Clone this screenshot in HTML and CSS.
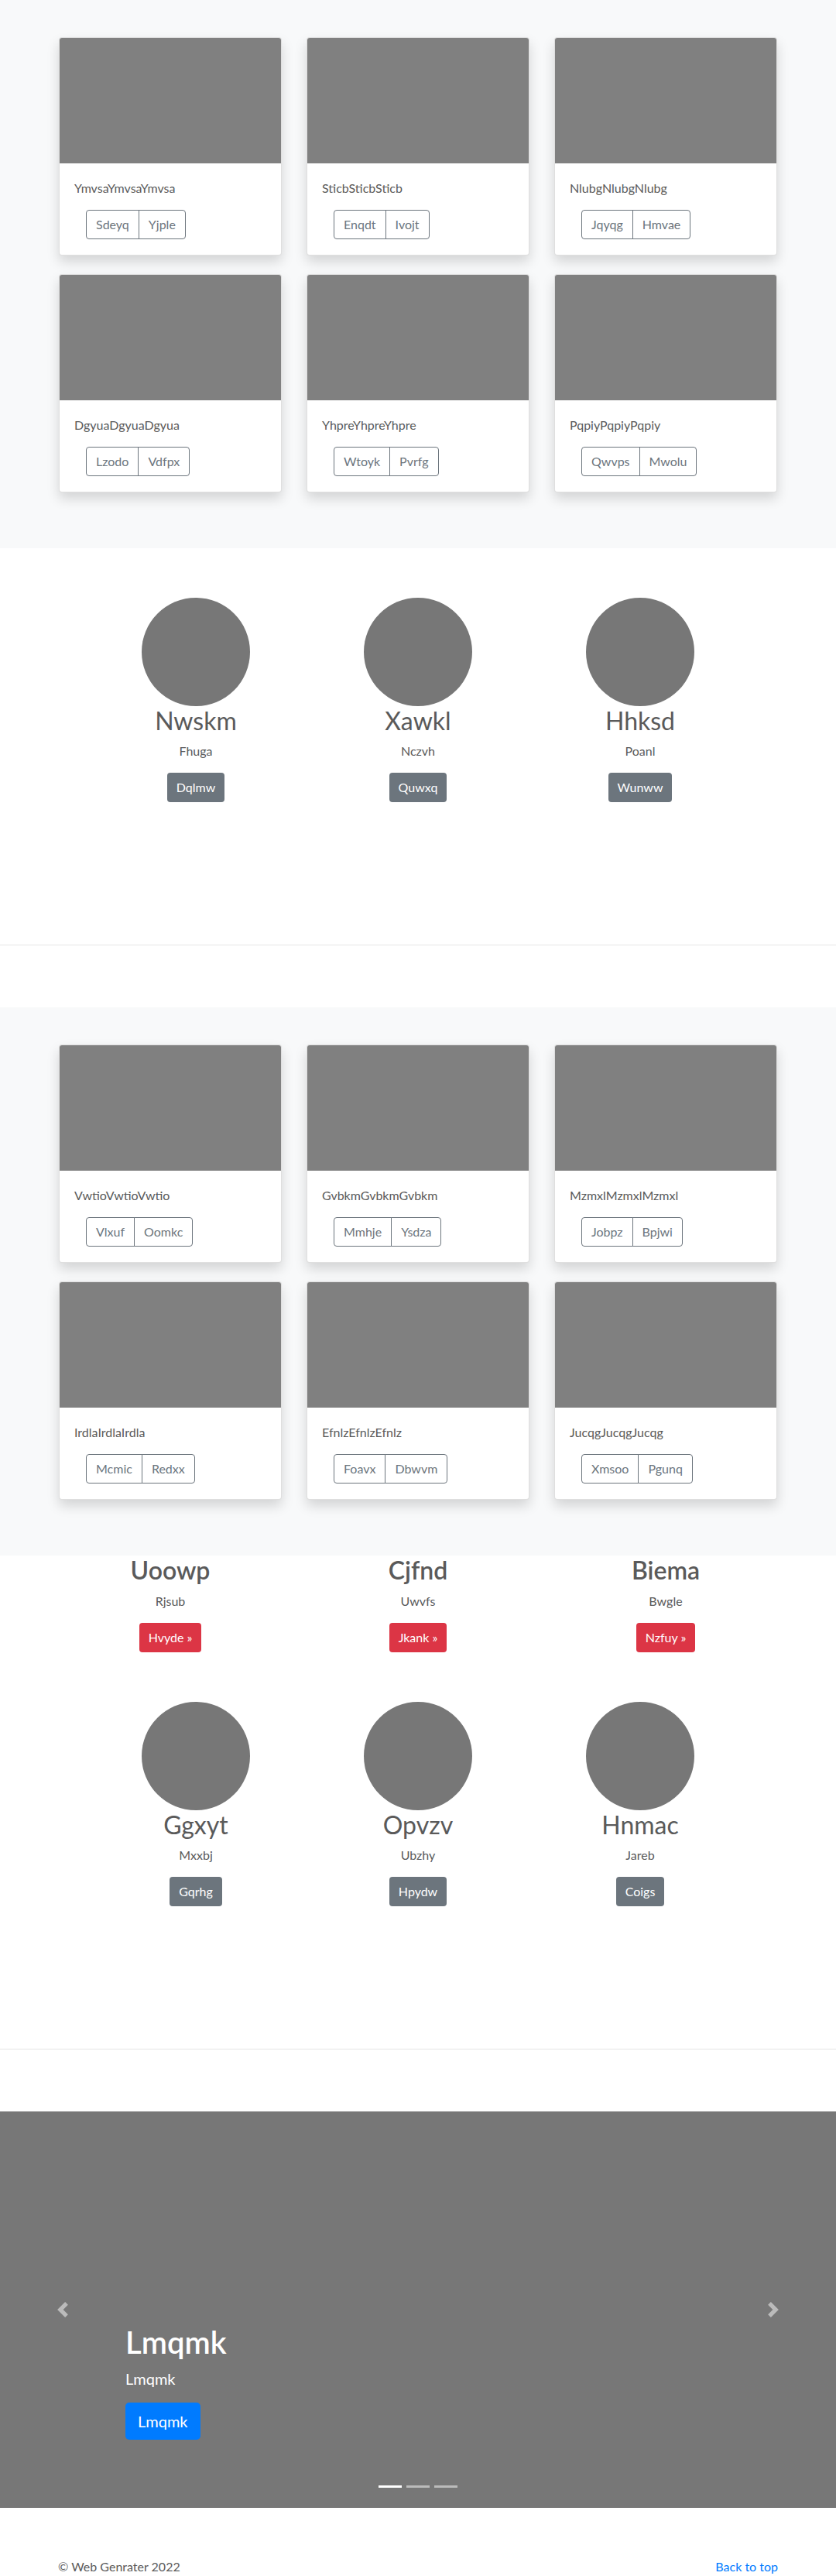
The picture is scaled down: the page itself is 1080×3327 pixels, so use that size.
FILE: index.html
```html
<!DOCTYPE html>
<html>

    <head>
        <title>Web Genrater</title>
        <link rel="stylesheet" href="styles.css">
    </head>

    <body>
        <section class="album">
            <div class="card-grid">
                <div class="card">
                    <div class="card-img"></div>
                    <div class="card-body">
                        <p class="card-text">YmvsaYmvsaYmvsa</p>
                        <div class="btn-group">
                            <button class="btn-outline">Sdeyq</button>
                            <button class="btn-outline">Yjple</button>
                        </div>
                    </div>
                </div>
                <div class="card">
                    <div class="card-img"></div>
                    <div class="card-body">
                        <p class="card-text">SticbSticbSticb</p>
                        <div class="btn-group">
                            <button class="btn-outline">Enqdt</button>
                            <button class="btn-outline">Ivojt</button>
                        </div>
                    </div>
                </div>
                <div class="card">
                    <div class="card-img"></div>
                    <div class="card-body">
                        <p class="card-text">NlubgNlubgNlubg</p>
                        <div class="btn-group">
                            <button class="btn-outline">Jqyqg</button>
                            <button class="btn-outline">Hmvae</button>
                        </div>
                    </div>
                </div>
                <div class="card">
                    <div class="card-img"></div>
                    <div class="card-body">
                        <p class="card-text">DgyuaDgyuaDgyua</p>
                        <div class="btn-group">
                            <button class="btn-outline">Lzodo</button>
                            <button class="btn-outline">Vdfpx</button>
                        </div>
                    </div>
                </div>
                <div class="card">
                    <div class="card-img"></div>
                    <div class="card-body">
                        <p class="card-text">YhpreYhpreYhpre</p>
                        <div class="btn-group">
                            <button class="btn-outline">Wtoyk</button>
                            <button class="btn-outline">Pvrfg</button>
                        </div>
                    </div>
                </div>
                <div class="card">
                    <div class="card-img"></div>
                    <div class="card-body">
                        <p class="card-text">PqpiyPqpiyPqpiy</p>
                        <div class="btn-group">
                            <button class="btn-outline">Qwvps</button>
                            <button class="btn-outline">Mwolu</button>
                        </div>
                    </div>
                </div>
            </div>
        </section>

        <section class="team">
            <div class="team-row">
                <div class="member">
                    <div class="avatar"></div>
                    <h2>Nwskm</h2>
                    <p>Fhuga</p>
                    <a class="btn btn-grey" href="#">Dqlmw</a>
                </div>
                <div class="member">
                    <div class="avatar"></div>
                    <h2>Xawkl</h2>
                    <p>Nczvh</p>
                    <a class="btn btn-grey" href="#">Quwxq</a>
                </div>
                <div class="member">
                    <div class="avatar"></div>
                    <h2>Hhksd</h2>
                    <p>Poanl</p>
                    <a class="btn btn-grey" href="#">Wunww</a>
                </div>
            </div>
        </section>

        <hr class="divider">

        <section class="album">
            <div class="card-grid">
                <div class="card">
                    <div class="card-img"></div>
                    <div class="card-body">
                        <p class="card-text">VwtioVwtioVwtio</p>
                        <div class="btn-group">
                            <button class="btn-outline">Vlxuf</button>
                            <button class="btn-outline">Oomkc</button>
                        </div>
                    </div>
                </div>
                <div class="card">
                    <div class="card-img"></div>
                    <div class="card-body">
                        <p class="card-text">GvbkmGvbkmGvbkm</p>
                        <div class="btn-group">
                            <button class="btn-outline">Mmhje</button>
                            <button class="btn-outline">Ysdza</button>
                        </div>
                    </div>
                </div>
                <div class="card">
                    <div class="card-img"></div>
                    <div class="card-body">
                        <p class="card-text">MzmxlMzmxlMzmxl</p>
                        <div class="btn-group">
                            <button class="btn-outline">Jobpz</button>
                            <button class="btn-outline">Bpjwi</button>
                        </div>
                    </div>
                </div>
                <div class="card">
                    <div class="card-img"></div>
                    <div class="card-body">
                        <p class="card-text">IrdlaIrdlaIrdla</p>
                        <div class="btn-group">
                            <button class="btn-outline">Mcmic</button>
                            <button class="btn-outline">Redxx</button>
                        </div>
                    </div>
                </div>
                <div class="card">
                    <div class="card-img"></div>
                    <div class="card-body">
                        <p class="card-text">EfnlzEfnlzEfnlz</p>
                        <div class="btn-group">
                            <button class="btn-outline">Foavx</button>
                            <button class="btn-outline">Dbwvm</button>
                        </div>
                    </div>
                </div>
                <div class="card">
                    <div class="card-img"></div>
                    <div class="card-body">
                        <p class="card-text">JucqgJucqgJucqg</p>
                        <div class="btn-group">
                            <button class="btn-outline">Xmsoo</button>
                            <button class="btn-outline">Pgunq</button>
                        </div>
                    </div>
                </div>
            </div>
        </section>

        <section class="team team-promo">
            <div class="promo-row">
                <div class="promo">
                    <h2>Uoowp</h2>
                    <p>Rjsub</p>
                    <a class="btn btn-red" href="#">Hvyde &raquo;</a>
                </div>
                <div class="promo">
                    <h2>Cjfnd</h2>
                    <p>Uwvfs</p>
                    <a class="btn btn-red" href="#">Jkank &raquo;</a>
                </div>
                <div class="promo">
                    <h2>Biema</h2>
                    <p>Bwgle</p>
                    <a class="btn btn-red" href="#">Nzfuy &raquo;</a>
                </div>
            </div>
            <div class="team-row">
                <div class="member">
                    <div class="avatar"></div>
                    <h2>Ggxyt</h2>
                    <p>Mxxbj</p>
                    <a class="btn btn-grey" href="#">Gqrhg</a>
                </div>
                <div class="member">
                    <div class="avatar"></div>
                    <h2>Opvzv</h2>
                    <p>Ubzhy</p>
                    <a class="btn btn-grey" href="#">Hpydw</a>
                </div>
                <div class="member">
                    <div class="avatar"></div>
                    <h2>Hnmac</h2>
                    <p>Jareb</p>
                    <a class="btn btn-grey" href="#">Coigs</a>
                </div>
            </div>
        </section>

        <hr class="divider">

        <div class="carousel">
            <a class="carousel-control prev" href="#">
                <svg width="20" height="20" viewBox="0 0 8 8" fill="#fff"><path d="M5.25 0l-4 4 4 4 1.5-1.5L4.25 4l2.5-2.5L5.25 0z"/></svg>
            </a>
            <div class="carousel-caption">
                <h1>Lmqmk</h1>
                <p>Lmqmk</p>
                <div class="caption-action">
                    <a class="btn btn-blue" href="#">Lmqmk</a>
                </div>
            </div>
            <a class="carousel-control next" href="#">
                <svg width="20" height="20" viewBox="0 0 8 8" fill="#fff"><path d="M2.75 0l-1.5 1.5L3.75 4l-2.5 2.5L2.75 8l4-4-4-4z"/></svg>
            </a>
            <ol class="indicators">
                <li class="active"></li>
                <li></li>
                <li></li>
            </ol>
        </div>

        <footer class="footer">
            <p>&copy; Web Genrater 2022</p>
            <a href="#">Back to top</a>
        </footer>
    </body>

</html>
```

FILE: styles.css
```css
html,
body {
    margin: 0;
    padding: 0;
}

body {
    font-family: Lato, "Open Sans", sans-serif;
    font-size: 16px;
    line-height: 1.5;
    color: #5a5a5a;
    background-color: #fff;
}

p {
    margin: 0;
}

a {
    text-decoration: none;
}

/* album de tarjetas */
.album {
    background-color: #f8f9fa;
    padding: 48px 0 72px;
}

.card-grid {
    width: 928px;
    margin: 0 auto;
    display: grid;
    grid-template-columns: repeat(3, 288px);
    gap: 24px 32px;
}

.card {
    background-color: #fff;
    border: 1px solid rgba(0, 0, 0, 0.125);
    border-radius: 4px;
    overflow: hidden;
    box-shadow: 0 8px 16px rgba(0, 0, 0, 0.15);
}

.card-img {
    height: 162px;
    background-color: #808080;
}

.card-body {
    padding: 20px 19px;
}

.card-text {
    margin-bottom: 16px;
}

.btn-group {
    display: inline-flex;
    margin-left: 15px;
}

.btn-outline {
    font-family: inherit;
    font-size: 16px;
    line-height: 24px;
    color: #6c757d;
    background: transparent;
    border: 1px solid #6c757d;
    padding: 6px 12px;
    border-radius: 0;
}

.btn-outline:first-child {
    border-radius: 4px 0 0 4px;
}

.btn-outline + .btn-outline {
    margin-left: -1px;
    border-radius: 0 4px 4px 0;
}

/* equipo */
.team {
    padding: 64px 0 184px;
}

.team-promo {
    padding-top: 0;
}

.team-row {
    display: grid;
    grid-template-columns: repeat(3, 287px);
    justify-content: center;
}

.promo-row {
    display: grid;
    grid-template-columns: repeat(3, 320px);
    justify-content: center;
    margin-bottom: 64px;
}

.member,
.promo {
    text-align: center;
}

.avatar {
    width: 140px;
    height: 140px;
    margin: 0 auto;
    border-radius: 50%;
    background-color: #777;
}

.member h2,
.promo h2 {
    font-size: 32px;
    line-height: 1.2;
    margin: 0 0 8px;
}

.member h2 {
    font-weight: 400;
}

.promo h2 {
    font-weight: 600;
}

.member p,
.promo p {
    margin-bottom: 16px;
}

.btn {
    display: inline-block;
    font-size: 16px;
    line-height: 24px;
    padding: 7px 12px;
    border-radius: 4px;
    color: #fff;
}

.btn-grey {
    background-color: #6c757d;
}

.btn-red {
    background-color: #dc3545;
}

.divider {
    height: 1px;
    margin: 0 0 80px;
    border: none;
    background-color: rgba(0, 0, 0, 0.1);
}

/* carrusel */
.carousel {
    position: relative;
    height: 512px;
    margin-bottom: 64px;
    background-color: #777;
}

.carousel-control {
    position: absolute;
    top: 0;
    bottom: 0;
    width: 15%;
    display: flex;
    align-items: center;
    justify-content: center;
    opacity: 0.5;
}

.carousel-control.prev {
    left: 0;
}

.carousel-control.next {
    right: 0;
}

.carousel-caption {
    position: absolute;
    left: 15%;
    right: 15%;
    bottom: 48px;
    padding: 20px 0;
    color: #fff;
}

.carousel-caption h1 {
    font-size: 40px;
    font-weight: 600;
    line-height: 1.2;
    margin: 0 0 8px;
}

.carousel-caption p {
    font-size: 20px;
    margin-bottom: 16px;
}

.caption-action {
    display: flex;
    margin-bottom: 20px;
}

.btn-blue {
    background-color: #007bff;
    font-size: 20px;
    line-height: 30px;
    padding: 9px 16px;
    border-radius: 5px;
}

.indicators {
    position: absolute;
    left: 0;
    right: 0;
    bottom: 26px;
    margin: 0;
    padding: 0;
    list-style: none;
    display: flex;
    justify-content: center;
    gap: 6px;
}

.indicators li {
    width: 30px;
    height: 3px;
    background-color: #fff;
    opacity: 0.5;
}

.indicators li.active {
    opacity: 1;
}

/* pie */
.footer {
    width: 930px;
    margin: 0 auto;
    display: flex;
    justify-content: space-between;
}

.footer a {
    color: #007bff;
}
```
